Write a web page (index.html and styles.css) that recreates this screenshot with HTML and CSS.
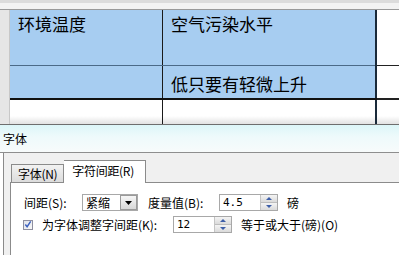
FILE: index.html
```html
<!DOCTYPE html>
<html>
<head>
  <title>字体</title>
  <meta charset="utf-8">
  <link rel="stylesheet" href="styles.css">
</head>
<body>
  <div class="doc">
    <div class="ruler-top"></div>
    <div class="doc-body">
      <div class="ruler-left"></div>
      <table class="grid">
        <tr class="row-head">
          <td class="cell blue c1">环境温度</td>
          <td class="cell blue c2">空气污染水平</td>
          <td class="cell c3"></td>
        </tr>
        <tr class="row-mid">
          <td class="cell blue c1"></td>
          <td class="cell blue c2">低只要有轻微上升</td>
          <td class="cell c3"></td>
        </tr>
        <tr class="row-end">
          <td class="cell c1"></td>
          <td class="cell c2"></td>
          <td class="cell c3"></td>
        </tr>
      </table>
    </div>
  </div>

  <div class="dialog">
    <div class="title">字体</div>
    <div class="frame">
      <div class="tabs">
        <div class="tab">字体(N)</div>
        <div class="tab active">字符间距(R)</div>
      </div>
      <div class="panel">
        <div class="line">
          <span class="lbl lbl-gap">间距(S):</span>
          <div class="combo">
            <span class="combo-val">紧缩</span>
            <span class="combo-btn">
              <svg width="7" height="4" viewBox="0 0 7 4"><path d="M0 0h7L3.5 4z" fill="#000"/></svg>
            </span>
          </div>
          <span class="lbl lbl-measure">度量值(B):</span>
          <div class="spin w-measure">
            <span class="spin-val">4.5</span>
            <span class="spin-btn"><i class="up"></i><i class="down"></i></span>
          </div>
          <span class="lbl lbl-unit">磅</span>
        </div>
        <div class="line">
          <span class="check">
            <svg width="9" height="9" viewBox="0 0 9 9"><path d="M1.5 4.5l2 2.5 4-6" fill="none" stroke="#3a5fbf" stroke-width="1.6"/></svg>
          </span>
          <span class="lbl lbl-kern">为字体调整字间距(K):</span>
          <div class="spin w-kern">
            <span class="spin-val">12</span>
            <span class="spin-btn"><i class="up"></i><i class="down"></i></span>
          </div>
          <span class="lbl lbl-more">等于或大于(磅)(O)</span>
        </div>
      </div>
    </div>
  </div>
</body>
</html>
```

FILE: styles.css
```css
html, body {
  margin: 0;
  padding: 0;
}
body {
  width: 399px;
  height: 255px;
  overflow: hidden;
  background: #fff;
  font-family: "Noto Sans CJK SC", "Liberation Sans", sans-serif;
  color: #000;
}

/* document area */
.doc {
  height: 125px;
  border-bottom: 1px solid #6e6e6e;
  box-sizing: border-box;
  background: linear-gradient(to bottom, #fff 0, #fff 116px, #e2e2e2 124px);
}
.ruler-top {
  height: 10px;
  background: linear-gradient(to bottom, #dcdcdc 0, #dcdcdc 3px, #f3f3f3 3px, #f3f3f3 9px, #9a9a9a 9px);
}
.doc-body {
  display: flex;
}
.ruler-left {
  width: 9px;
  height: 114px;
  background: #e6e6e6;
  border-right: 1px solid #c8c8c8;
}
.grid {
  border-collapse: collapse;
  table-layout: fixed;
  font-size: 17px;
  line-height: 20px;
}
.cell {
  padding: 0;
  vertical-align: top;
  border-right: 1px solid #1a1a1a;
}
.blue {
  background: #a7cdf1;
}
.c1 {
  width: 144px;
  padding-left: 8px;
}
.c2 {
  width: 204px;
  padding-left: 8px;
  border-right: 2px solid #1a2a3a;
}
.c3 {
  width: 22px;
  border-right: none;
}
.row-head .cell {
  height: 55px;
  padding-top: 4px;
  box-sizing: border-box;
  border-bottom: 1px solid #4b6a88;
}
.row-mid .cell {
  height: 33px;
  padding-top: 8px;
  box-sizing: border-box;
  border-bottom: 2px solid #111;
}
.row-mid .c3,
.row-head .c3 {
  border-bottom-color: #222;
}
.row-end .cell {
  height: 24px;
  background: transparent;
}

/* dialog */
.dialog {
  font-size: 12px;
  line-height: 14px;
}
.title {
  height: 28px;
  padding: 7px 0 0 3px;
  box-sizing: border-box;
  background: linear-gradient(to bottom, #dcf6f8 0, #eefafb 12px, #f8fbfb 28px);
  border-bottom: 1px solid #8e8e8e;
}
.frame {
  margin-left: 3px;
  border-left: 1px solid #8a8a8a;
  background: #f0f0f0;
  padding: 6px 0 0 6px;
}
.tabs {
  display: flex;
  align-items: flex-end;
  height: 23px;
  padding-left: 1px;
}
.tab {
  height: 18px;
  padding: 2px 6px 0 6px;
  box-sizing: border-box;
  border: 1px solid #8b8b8b;
  border-bottom: none;
  background: linear-gradient(to bottom, #f2f2f2, #dcdcdc);
  white-space: nowrap;
  letter-spacing: -0.3px;
}
.tab.active {
  height: 23px;
  width: 82px;
  padding: 3px 0 0 8px;
  background: #fff;
  margin-bottom: -1px;
  position: relative;
  border-left: none;
}
.panel {
  background: #fff;
  border-left: 1px solid #8b8b8b;
  border-top: 1px solid #8b8b8b;
  height: 80px;
  padding: 11px 0 0 13px;
  box-sizing: border-box;
}
.line {
  display: flex;
  align-items: center;
  height: 17px;
  margin-bottom: 5px;
}
.lbl {
  white-space: nowrap;
}
.lbl-gap {
  width: 58px;
}
.combo {
  width: 56px;
  height: 17px;
  box-sizing: border-box;
  border: 1px solid #a8a8a8;
  display: flex;
  align-items: center;
}
.combo-val {
  flex: 1;
  padding-left: 3px;
}
.combo-btn {
  width: 17px;
  height: 15px;
  box-sizing: border-box;
  border: 1px solid #9a9a9a;
  background: linear-gradient(to bottom, #f6f6f6, #d8d8d8);
  display: flex;
  align-items: center;
  justify-content: center;
}
.lbl-measure {
  margin-left: 10px;
  width: 71px;
}
.spin {
  height: 17px;
  box-sizing: border-box;
  border: 1px solid #a8a8a8;
  display: flex;
  align-items: center;
}
.w-measure {
  width: 59px;
}
.w-kern {
  width: 59px;
}
.spin-val {
  flex: 1;
  padding-left: 3px;
  font-family: "DejaVu Sans Mono", monospace;
  font-size: 11px;
}
.spin-btn {
  width: 16px;
  height: 15px;
  display: flex;
  flex-direction: column;
  background: #e4e4e4;
  border-left: 1px solid #c4c4c4;
}
.spin-btn i {
  flex: 1;
  position: relative;
  background: linear-gradient(to bottom, #f4f4f4, #dadada);
}
.spin-btn i.up {
  border-bottom: 1px solid #bdbdbd;
}
.spin-btn i::after {
  content: "";
  position: absolute;
  left: 5px;
  top: 2px;
  border-left: 3px solid transparent;
  border-right: 3px solid transparent;
}
.spin-btn i.up::after {
  border-bottom: 3px solid #3d5ea8;
}
.spin-btn i.down::after {
  border-top: 3px solid #3d5ea8;
  top: 2px;
}
.lbl-unit {
  margin-left: 9px;
}
.check {
  width: 10px;
  height: 10px;
  box-sizing: border-box;
  border: 1px solid #8e8fa0;
  background: linear-gradient(to bottom right, #dfe2ea, #f8f8f8);
  display: flex;
  align-items: center;
  justify-content: center;
  margin-left: -1px;
  margin-right: 9px;
}
.lbl-kern {
  width: 131px;
}
.lbl-more {
  margin-left: 9px;
}
```
